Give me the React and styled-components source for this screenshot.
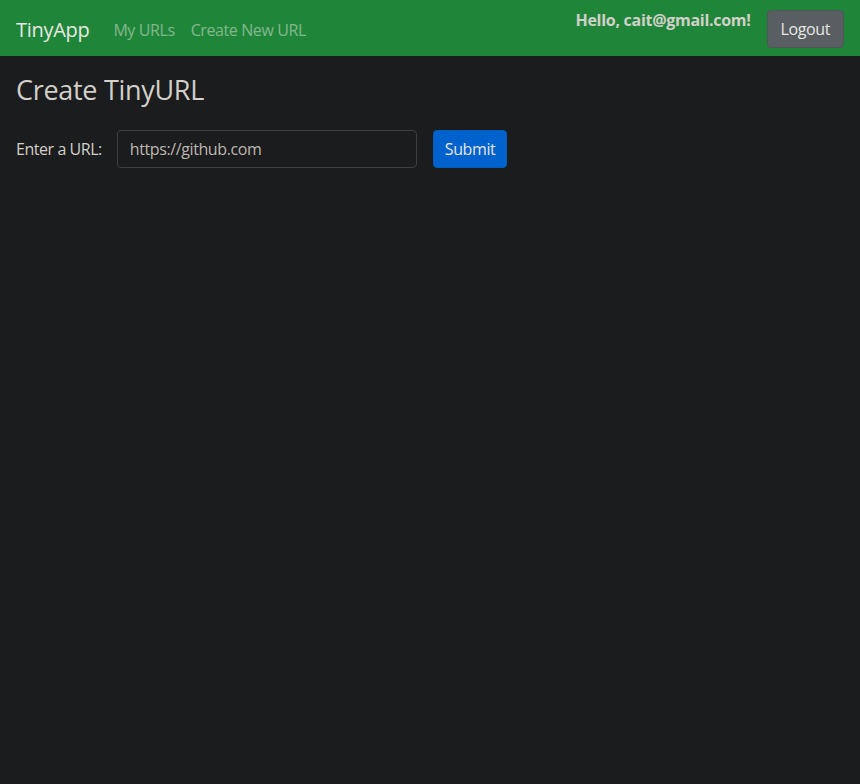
import React from "react";
import styled, { createGlobalStyle } from "styled-components";

const Global = createGlobalStyle`
  html, body { margin: 0; padding: 0; background: #1b1c1e; }
  body {
    font-family: "Open Sans", "Noto Sans", sans-serif;
    color: #d3cfc9;
    font-size: 16px;
    line-height: 1.5;
    min-height: 784px;
  }
  * { box-sizing: border-box; }
`;

const Nav = styled.nav`
  height: 56px;
  background: #1f8639;
  display: flex;
  align-items: center;
  padding: 12px 16px 8px;
`;

const Brand = styled.a`
  font-size: 20px;
  color: #e8e6e3;
  margin-right: 24px;
  letter-spacing: -0.3px;
`;

const NavLinks = styled.div`
  display: flex;
  gap: 16px;
  flex: 1;
`;

const NavLink = styled.a`
  font-size: 16px;
  color: rgba(232, 230, 227, 0.5);
  letter-spacing: -0.4px;
`;

const Right = styled.div`
  display: flex;
  align-items: flex-start;
  gap: 16px;
  align-self: stretch;
  margin-top: -2px;
`;

const Hello = styled.span`
  font-weight: 700;
  font-size: 16px;
  color: #d3cfc9;
  line-height: 1.2;
  margin-top: 1px;
  letter-spacing: -0.28px;
`;

const Button = styled.button`
  font-family: inherit;
  font-size: 16px;
  line-height: 1.5;
  height: 38px;
  padding: 0 ${(p) => p.$px || 12}px;
  border-radius: 4px;
  border: 1px solid ${(p) => p.$border};
  background: ${(p) => p.$bg};
  color: #e8e6e3;
  letter-spacing: -0.4px;
  cursor: pointer;
`;

const Main = styled.main`
  padding: 0 16px;
`;

const Title = styled.h1`
  margin: 18px 0 24px;
  font-size: 27px;
  font-weight: 400;
  line-height: 1.2;
  color: #d3cfc9;
  letter-spacing: -0.3px;
`;

const Form = styled.form`
  display: flex;
  align-items: center;
`;

const Label = styled.label`
  font-size: 16px;
  margin-right: 15px;
  letter-spacing: -0.45px;
`;

const Input = styled.input`
  width: 300px;
  height: 38px;
  padding: 6px 12px;
  font-family: inherit;
  font-size: 16px;
  color: #bdb7af;
  background: #1b1c1e;
  border: 1px solid #3b4043;
  border-radius: 4px;
  margin-right: 16px;
  outline: none;
  letter-spacing: -0.4px;
`;

export default function App() {
  return (
    <>
      <Global />
      <Nav>
        <Brand>TinyApp</Brand>
        <NavLinks>
          <NavLink>My URLs</NavLink>
          <NavLink>Create New URL</NavLink>
        </NavLinks>
        <Right>
          <Hello>Hello, cait@gmail.com!</Hello>
          <Button type="button" $bg="#585e62" $border="#50575b" $px={13}>
            Logout
          </Button>
        </Right>
      </Nav>
      <Main>
        <Title>Create TinyURL</Title>
        <Form onSubmit={(e) => e.preventDefault()}>
          <Label>Enter a URL:</Label>
          <Input type="text" defaultValue="https://github.com" />
          <Button type="submit" $bg="#0062cc" $border="#005cbf" $px={11}>
            Submit
          </Button>
        </Form>
      </Main>
    </>
  );
}
